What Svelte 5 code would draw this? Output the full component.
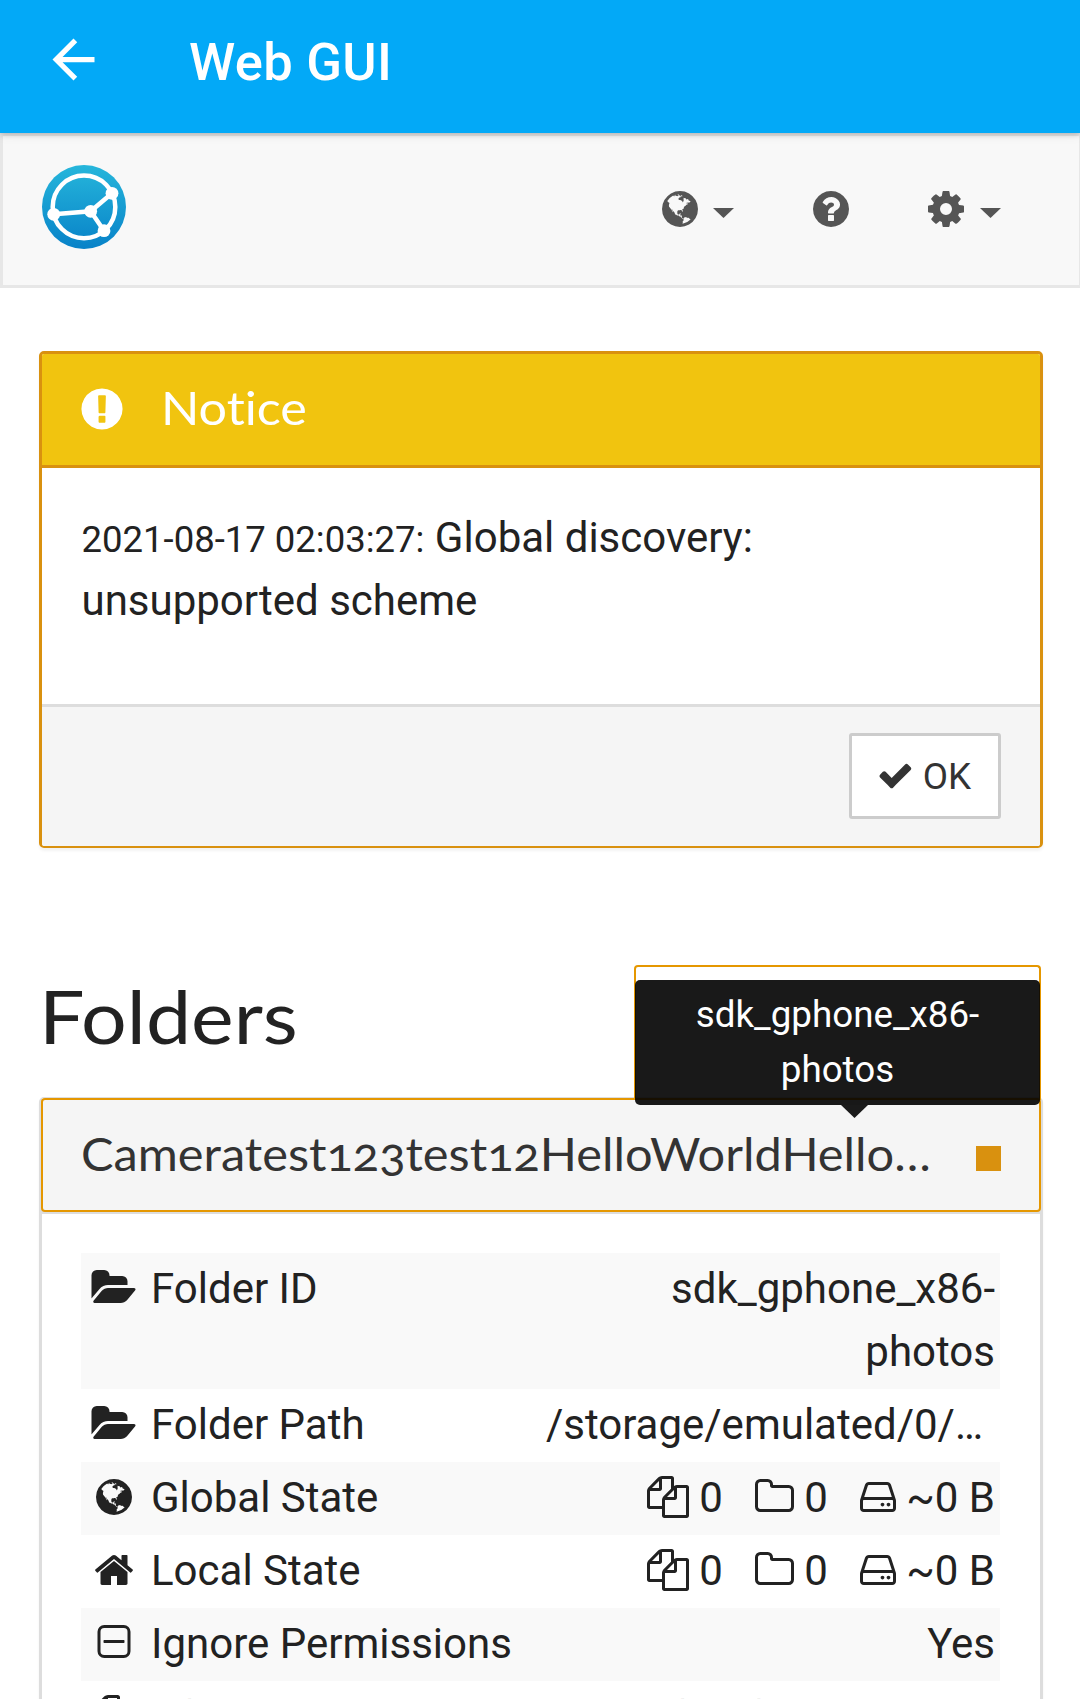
<script>
  const icons = {
    cog: 'M1152 896q0-106-75-181t-181-75-181 75-75 181 75 181 181 75 181-75 75-181zm512-109v222q0 12-8 23t-20 13l-185 28q-19 54-39 91 35 50 107 138 10 12 10 25t-9 23q-27 37-99 108t-94 71q-12 0-26-9l-138-108q-44 23-91 38-16 136-29 186-7 28-36 28h-222q-14 0-24.5-8.5t-11.5-21.5l-28-184q-49-16-90-37l-141 107q-10 9-25 9-14 0-25-11-126-114-165-168-7-10-7-23 0-12 8-23 15-21 51-66.5t54-70.5q-27-50-41-99l-183-27q-13-2-21-12.5t-8-23.5v-222q0-12 8-23t19-13l186-28q14-46 39-92-40-57-107-138-10-12-10-24 0-10 9-23 26-36 98.5-107.5t94.5-71.5q13 0 26 10l138 107q44-23 91-38 16-136 29-186 7-28 36-28h222q14 0 24.5 8.5t11.5 21.5l28 184q49 16 90 37l142-107q9-9 24-9 13 0 25 10 129 119 165 170 7 8 7 22 0 12-8 23-15 21-51 66.5t-54 70.5q26 50 41 98l183 28q13 2 21 12.5t8 23.5z',
    question: 'M1024 1376v-192q0-14-9-23t-23-9h-192q-14 0-23 9t-9 23v192q0 14 9 23t23 9h192q14 0 23-9t9-23zm256-672q0-88-55.5-163t-138.5-116-170-41q-243 0-371 213-15 24 8 42l132 100q7 6 19 6 16 0 25-12 53-68 86-92 34-24 86-24 48 0 85.5 26t37.5 59q0 38-20 61t-68 45q-63 28-115.5 86.5t-52.5 125.5v36q0 14 9 23t23 9h192q14 0 23-9t9-23q0-19 21.5-49.5t54.5-49.5q32-18 49-28.5t46-35 44.5-48 28-60.5 12.5-81zm384 192q0 209-103 385.5t-279.5 279.5-385.5 103-385.5-103-279.5-279.5-103-385.5 103-385.5 279.5-279.5 385.5-103 385.5 103 279.5 279.5 103 385.5z',
    globe: 'M896 128q209 0 385.5 103t279.5 279.5 103 385.5-103 385.5-279.5 279.5-385.5 103-385.5-103-279.5-279.5-103-385.5 103-385.5 279.5-279.5 385.5-103zm274 521q-2 1-9.5 9.5t-13.5 9.5q2 0 4.5-5t5-11 3.5-7q6-7 22-15 14-6 52-12 34-8 51 11-2-2 9.5-13t14.5-12q3-2 15-4.5t15-7.5l2-22q-12 1-17.5-7t-6.5-21q0 2-6 8 0-7-4.5-8t-11.5 1-9 1q-10-3-15-7.5t-8-16.5-4-15q-2-5-9.5-11t-9.5-10q-1-2-2.5-5.5t-3-6.5-4-5.5-5.5-2.5-7 5-7.5 10-4.5 5q-3-2-6-1.5t-4.5 1-4.5 3-5 3.5q-3 2-8.5 3t-8.5 2q15-5-1-11-10-4-16-3 9-4 7.5-12t-8.5-14h5q-1-4-8.5-8.5t-17.5-8.5-13-6q-8-5-34-9.5t-33-.5q-5 6-4.5 10.5t4 14 3.5 12.5q1 6-5.5 13t-6.5 12q0 7 14 15.5t10 21.5q-3 8-16 16t-16 12q-5 8-1.5 18.5t10.5 16.5q2 2 1.5 4t-3.5 4.5-5.5 4-6.5 3.5l-3 2q-11 5-20.5-6t-13.5-26q-7-25-16-30-23-8-29 1-5-13-41-26-25-9-58-4 6-1 0-15-7-15-19-12 3-6 4-17.5t1-13.5q3-13 12-23 1-1 7-8.5t9.5-13.5.5-6q35 4 50-11 5-5 11.5-17t10.5-17q9-6 14-5.5t14.5 5.5 14.5 5q14 1 15.5-11t-7.5-20q12 1 3-17-4-7-8-9-12-4-27 5-8 4 2 8-1-1-9.5 10.5t-16.5 17.5-16-5q-1-1-5.5-13.5t-9.5-13.5q-8 0-16 15 3-8-11-15t-24-8q19-12-8-27-7-4-20.5-5t-19.5 4q-5 7-5.5 11.5t5 8 10.5 5.5 11.5 4 8.5 3q14 10 8 14-2 1-8.5 3.5t-11.5 4.5-6 4q-3 4 0 14t-2 14q-5-5-9-17.5t-7-16.5q7 9-25 6l-10-1q-4 0-16 2t-20.5 1-13.5-8q-4-8 0-20 1-4 4-2-4-3-11-9.5t-10-8.5q-46 15-94 41 6 1 12-1 5-2 13-6.5t10-5.5q34-14 42-7l5-5q14 16 20 25-7-4-30-1-20 6-22 12 7 12 5 18-4-3-11.5-10t-14.5-11-15-5q-16 0-22 1-146 80-235 222 7 7 12 8 4 1 5 9t2.5 11 11.5-3q9 8 3 19 1-1 44 27 19 17 21 21 3 11-10 18-1-2-9-9t-9-4q-3 5 .5 18.5t10.5 12.5q-7 0-9.5 16t-2.5 35.5-1 23.5l2 1q-3 12 5.5 34.5t21.5 19.5q-13 3 20 43 6 8 8 9 3 2 12 7.5t15 10 10 10.5q4 5 10 22.5t14 23.5q-2 6 9.5 20t10.5 23q-1 0-2.5 1t-2.5 1q3 7 15.5 14t15.5 13q1 3 2 10t3 11 8 2q2-20-24-62-15-25-17-29-3-5-5.5-15.5t-4.5-14.5q2 0 6 1.5t8.5 3.5 7.5 4 2 3q-3 7 2 17.5t12 18.5 17 19 12 13q6 6 14 19.5t0 13.5q9 0 20 10.5t17 19.5q5 8 8 26t5 24q2 7 8.5 13.5t12.5 9.5l16 8 13 7q5 2 18.5 10.5t21.5 11.5q10 4 16 4t14.5-2.5 13.5-3.5q15-2 29 15t21 21q36 19 55 11-2 1 .5 7.5t8 15.5 9 14.5 5.5 8.5q5 6 18 15t18 15q6-4 7-9-3 8 7 20t18 10q14-3 14-32-31 15-49-18 0-1-2.5-5.5t-4-8.5-2.5-8.5 0-7.5 5-3q9 0 10-3.5t-2-12.5-4-13q-1-8-11-20t-12-15q-5 9-16 8t-16-9q0 1-1.5 5.5t-1.5 6.5q-13 0-15-1 1-3 2.5-17.5t3.5-22.5q1-4 5.5-12t7.5-14.5 4-12.5-4.5-9.5-17.5-2.5q-19 1-26 20-1 3-3 10.5t-5 11.5-9 7q-7 3-24 2t-24-5q-13-8-22.5-29t-9.5-37q0-10 2.5-26.5t3-25-5.5-24.5q3-2 9-9.5t10-10.5q2-1 4.5-1.5t4.5 0 4-1.5 3-6q-1-1-4-3-3-3-4-3 7 3 28.5-1.5t27.5 1.5q15 11 22-2 0-1-2.5-9.5t-.5-13.5q5 27 29 9 3 3 15.5 5t17.5 5q3 2 7 5.5t5.5 4.5 5-.5 8.5-6.5q10 14 12 24 11 40 19 44 7 3 11 2t4.5-9.5 0-14-1.5-12.5l-1-8v-18l-1-8q-15-3-18.5-12t1.5-18.5 15-18.5q1-1 8-3.5t15.5-6.5 12.5-8q21-19 15-35 7 0 11-9-1 0-5-3t-7.5-5-4.5-2q9-5 2-16 5-3 7.5-11t7.5-10q9 12 21 2 7-8 1-16 5-7 20.5-10.5t18.5-9.5q7 2 8-2t1-12 3-12q4-5 15-9t13-5l17-11q3-4 0-4 18 2 31-11 10-11-6-20 3-6-3-9.5t-15-5.5q3-1 11.5-.5t10.5-1.5q15-10-7-16-17-5-43 12zm-163 877q206-36 351-189-3-3-12.5-4.5t-12.5-3.5q-18-7-24-8 1-7-2.5-13t-8-9-12.5-8-11-7q-2-2-7-6t-7-5.5-7.5-4.5-8.5-2-10 1l-3 1q-3 1-5.5 2.5t-5.5 3-4 3 0 2.5q-21-17-36-22-5-1-11-5.5t-10.5-7-10-1.5-11.5 7q-5 5-6 15t-2 13q-7-5 0-17.5t2-18.5q-3-6-10.5-4.5t-12 4.5-11.5 8.5-9 6.5-8.5 5.5-8.5 7.5q-3 4-6 12t-5 11q-2-4-11.5-6.5t-9.5-5.5q2 10 4 35t5 38q7 31-12 48-27 25-29 40-4 22 12 26 0 7-8 20.5t-7 21.5q0 6 2 16z',
    exclamation: 'M896 128q209 0 385.5 103t279.5 279.5 103 385.5-103 385.5-279.5 279.5-385.5 103-385.5-103-279.5-279.5-103-385.5 103-385.5 279.5-279.5 385.5-103zm128 1247v-190q0-14-9-23.5t-22-9.5h-192q-13 0-23 10t-10 23v190q0 13 10 23t23 10h192q13 0 22-9.5t9-23.5zm-2-344l18-621q0-12-10-18-10-8-24-8h-220q-14 0-24 8-10 6-10 18l17 621q0 10 10 17.5t24 7.5h185q14 0 23.5-7.5t10.5-17.5z',
    check: 'M1671 566q0 40-28 68l-724 724-136 136q-28 28-68 28t-68-28l-136-136-362-362q-28-28-28-68t28-68l136-136q28-28 68-28t68 28l294 295 656-657q28-28 68-28t68 28l136 136q28 28 28 68z',
    folderOpen: 'M1815 952q0 31-31 66l-336 396q-43 51-120.5 86.5t-143.5 35.5h-1088q-34 0-60.5-13t-26.5-43q0-31 31-66l336-396q43-51 120.5-86.5t143.5-35.5h1088q34 0 60.5 13t26.5 43zm-343-344v160h-832q-94 0-197 47.5t-164 119.5l-337 396-5 6q0-4-.5-12.5t-.5-12.5v-960q0-92 66-158t158-66h320q92 0 158 66t66 158v32h544q92 0 158 66t66 158z',
    home: 'M1472 992v480q0 26-19 45t-45 19h-384v-384h-256v384h-384q-26 0-45-19t-19-45v-480q0-1 .5-3t.5-3l575-474 575 474q1 2 1 6zm223-69l-62 74q-8 9-21 11h-3q-13 0-21-7l-692-577-692 577q-12 8-24 7-13-2-21-11l-62-74q-8-10-7-23.5t11-21.5l719-599q32-26 76-26t76 26l244 204v-195q0-14 9-23t23-9h192q14 0 23 9t9 23v408l219 182q10 8 11 21.5t-7 23.5z',
    minusSquare: 'M480 128h832a288 288 0 0 1 288 288v832a288 288 0 0 1-288 288h-832a288 288 0 0 1-288-288v-832a288 288 0 0 1 288-288zm0 128a160 160 0 0 0-160 160v832a160 160 0 0 0 160 160h832a160 160 0 0 0 160-160v-832a160 160 0 0 0-160-160zm0 512h832q32 0 32 32v64q0 32-32 32h-832q-32 0-32-32v-64q0-32 32-32z',
    files: 'M1696 384q40 0 68 28t28 68v1216q0 40-28 68t-68 28h-960q-40 0-68-28t-28-68v-288h-544q-40 0-68-28t-28-68v-672q0-40 20-88t48-76l408-408q28-28 76-48t88-20h416q40 0 68 28t28 68v328q68-40 128-40h416zm-544 213l-299 299h299v-299zm-640-384l-299 299h299v-299zm196 647l316-316v-416h-384v416q0 40-28 68t-68 28h-416v640h512v-256q0-40 20-88t48-76zm956 804v-1152h-384v416q0 40-28 68t-68 28h-416v640h896z',
    folder: 'M1600 1312v-704q0-40-28-68t-68-28h-704q-40 0-68-28t-28-68v-64q0-40-28-68t-68-28h-320q-40 0-68 28t-28 68v960q0 40 28 68t68 28h1216q40 0 68-28t28-68zm128-704v704q0 92-66 158t-158 66h-1216q-92 0-158-66t-66-158v-960q0-92 66-158t158-66h320q92 0 158 66t66 158v32h672q92 0 158 66t66 158z',
    hdd: 'M1168 1216q0 33-23.5 56.5t-56.5 23.5-56.5-23.5-23.5-56.5 23.5-56.5 56.5-23.5 56.5 23.5 23.5 56.5zm256 0q0 33-23.5 56.5t-56.5 23.5-56.5-23.5-23.5-56.5 23.5-56.5 56.5-23.5 56.5 23.5 23.5 56.5zm112 160v-320q0-13-9.5-22.5t-22.5-9.5h-1216q-13 0-22.5 9.5t-9.5 22.5v320q0 13 9.5 22.5t22.5 9.5h1216q13 0 22.5-9.5t9.5-22.5zm-1230-480h1180l-157-482q-4-13-16-21.5t-26-8.5h-782q-14 0-26 8.5t-16 21.5zm1358 160v320q0 66-47 113t-113 47h-1216q-66 0-113-47t-47-113v-320q0-25 16-75l197-606q17-53 63-86t101-33h782q55 0 101 33t63 86l197 606q16 50 16 75z'
  };

  const rows = [
    { icon: 'folderOpen', label: 'Folder ID', value: 'sdk_gphone_x86-photos', wrap: true },
    { icon: 'folderOpen', label: 'Folder Path', value: '/storage/emulated/0/…', path: true },
    { icon: 'globe', label: 'Global State', stats: true },
    { icon: 'home', label: 'Local State', stats: true },
    { icon: 'minusSquare', label: 'Ignore Permissions', value: 'Yes' },
    { icon: 'files', label: 'File Versioning', value: 'Simple File Versioning' }
  ];
</script>

{#snippet icon(name, box = '0 0 1792 1792')}
  <svg class="icon" viewBox={box} aria-hidden="true"><path d={icons[name]} /></svg>
{/snippet}

<div class="screen">
  <header class="appbar">
    <svg class="back" viewBox="0 0 24 24" aria-hidden="true">
      <path d="M20 11H7.83l5.59-5.59L12 4l-8 8 8 8 1.41-1.41L7.83 13H20v-2z" />
    </svg>
    <h1>Web GUI</h1>
  </header>

  <nav class="navbar">
    <svg class="logo" viewBox="0 0 84 84" aria-hidden="true">
      <defs>
        <linearGradient id="brand" x1="0" y1="0" x2="0" y2="1">
          <stop offset="0" stop-color="#26b6db" />
          <stop offset="1" stop-color="#0882c8" />
        </linearGradient>
      </defs>
      <circle cx="42" cy="42" r="42" fill="url(#brand)" />
      <g fill="none" stroke="#fff" stroke-width="4.5">
        <circle cx="42" cy="41.9" r="31.3" />
        <path d="M11.7 49.3 48.7 46.3 70 28.3M48.7 46.3 62 65.7" />
      </g>
      <g fill="#fff">
        <circle cx="70" cy="28.3" r="6.4" />
        <circle cx="48.7" cy="46.3" r="6.4" />
        <circle cx="62" cy="65.7" r="6.4" />
        <circle cx="11.7" cy="49.3" r="6.4" />
      </g>
    </svg>
    <div class="menu">
      <span class="item">{@render icon('globe')}<i class="caret"></i></span>
      <span class="item">{@render icon('question')}</span>
      <span class="item">{@render icon('cog')}<i class="caret"></i></span>
    </div>
  </nav>

  <main>
    <section class="panel notice">
      <h3>{@render icon('exclamation')}<span>Notice</span></h3>
      <p><small>2021-08-17 02:03:27:</small> Global discovery:<br />unsupported scheme</p>
      <footer>
        <button>{@render icon('check')}<span>OK</span></button>
      </footer>
    </section>

    <h2><span>Folders</span></h2>

    <section class="panel folder">
      <div class="heading">
        <span class="name">Cameratest123test12HelloWorldHello…</span>
        <i class="status"></i>
        <div class="ring"></div>
        <div class="tooltip">sdk_gphone_x86-<br />photos</div>
      </div>
      <div class="rows">
        {#each rows as row}
          <div class="row">
            <span class="lead">{@render icon(row.icon)}</span>
            <span class="label">{row.label}</span>
            {#if row.stats}
              <span class="value stats">
                <span class="stat files">{@render icon('files')}0</span>
                <span class="stat dirs">{@render icon('folder', '64 0 1664 1792')}0</span>
                <span class="stat size">{@render icon('hdd', '128 0 1536 1792')}~0 B</span>
              </span>
            {:else}
              <span class="value" class:wrap={row.wrap} class:path={row.path}>{row.value}</span>
            {/if}
          </div>
        {/each}
      </div>
    </section>
  </main>
</div>

<style>
  :global(body) {
    margin: 0;
    background: #fff;
  }
  * {
    box-sizing: border-box;
  }
  .screen {
    width: 1080px;
    height: 1699px;
    overflow: hidden;
    font: 42px/63px Roboto, sans-serif;
    color: #222;
  }
  .icon {
    display: block;
    flex: none;
    width: 42px;
    height: 42px;
    fill: currentColor;
    overflow: visible;
  }
  .appbar {
    position: relative;
    z-index: 1;
    display: flex;
    align-items: flex-start;
    height: 133px;
    padding: 28px 42px 0;
    background: #03a9f7;
    color: #fff;
    box-shadow: 0 2px 5px rgba(0, 0, 0, 0.16), 0 1px 12px rgba(0, 0, 0, 0.08);
  }
  .back {
    width: 63px;
    height: 63px;
    fill: #fff;
  }
  h1 {
    margin: 3px 0 0 84px;
    font-size: 52.5px;
    line-height: 63px;
    font-weight: 500;
    letter-spacing: 0.3px;
  }
  .navbar {
    display: flex;
    justify-content: space-between;
    height: 155px;
    padding: 29px 78px 0 39px;
    border: 3px solid #e7e7e7;
    border-right-width: 1px;
    background: #f8f8f8;
    color: #555;
  }
  .logo {
    width: 84px;
    height: 84px;
  }
  .menu {
    display: flex;
    gap: 73px;
    padding-top: 23px;
  }
  .item {
    display: flex;
    gap: 12px;
  }
  .item:first-child {
    margin-right: 3px;
  }
  .item:last-child {
    gap: 13px;
  }
  .caret {
    margin-top: 20px;
    width: 21px;
    height: 10px;
    background: #555;
    clip-path: polygon(0 0, 100% 0, 50% 100%);
  }
  main {
    padding: 63px 37px 0 39px;
  }
  .panel {
    border: 3px solid #ddd;
    border-radius: 5px;
  }
  .notice {
    height: 497px;
    display: flex;
    flex-direction: column;
    border-color: #d9910f;
    border-bottom-width: 2px;
    overflow: hidden;
    box-shadow: 0 3px 3px rgba(0, 0, 0, 0.05);
  }
  h3 {
    display: flex;
    align-items: flex-start;
    gap: 35px;
    height: 114px;
    margin: 0;
    padding: 31px 36px 0;
    border-bottom: 3px solid #d9910f;
    background: #f1c40f;
    color: #fff;
    font: 400 47px/50px Lato, sans-serif;
    font-variant-ligatures: none;
  }
  h3 .icon {
    width: 48px;
    height: 48px;
  }
  h3 span {
    margin-top: -3px;
    transform: scaleX(1.07);
    transform-origin: left;
  }
  p {
    flex: 1;
    margin: 0;
    padding: 38px 39px 0 39.5px;
  }
  small {
    font-size: 36.5px;
    line-height: 0;
  }
  footer {
    display: flex;
    justify-content: flex-end;
    height: 142px;
    padding: 26px 39px 0;
    border-top: 3px solid #ddd;
    background: #f5f5f5;
  }
  button {
    display: flex;
    gap: 9px;
    width: 152px;
    height: 86px;
    padding: 20px 0 0 25px;
    border: 3px solid #ccc;
    border-radius: 3px;
    background: #fff;
    color: #333;
    font: 36.75px/42px Roboto, sans-serif;
  }
  button .icon {
    width: 36.75px;
    height: 36.75px;
    margin-top: 1px;
  }
  h2 {
    height: 80px;
    margin: 128px 0 41px;
    font: 400 73px/80px Lato, sans-serif;
  }
  h2 span {
    display: inline-block;
    transform: scaleX(1.105);
    transform-origin: left;
  }
  .folder {
    height: 640px;
    box-shadow: 0 3px 3px rgba(0, 0, 0, 0.05);
  }
  .heading {
    position: relative;
    display: flex;
    justify-content: space-between;
    height: 116px;
    margin-top: -2px;
    padding: 31px 39px 0;
    border-bottom: 3px solid #ddd;
    background: #f5f5f5;
    color: #333;
    font: 400 47px/50px Lato, sans-serif;
  }
  .heading::after {
    content: '';
    position: absolute;
    inset: 0 -1px -1px;
    border: 2px solid #e59700;
    border-radius: 4px;
  }
  .name {
    font-variant-numeric: oldstyle-nums;
    margin-top: -1px;
    transform: scaleX(1.037);
    transform-origin: left;
  }
  .status {
    margin-top: 17px;
    width: 25px;
    height: 25px;
    background: #d9910f;
  }
  .ring {
    position: absolute;
    right: -1px;
    top: -133px;
    width: 407px;
    height: 135px;
    border: 2px solid #e59700;
    border-bottom: 0;
    border-radius: 4px 4px 0 0;
  }
  .tooltip {
    position: absolute;
    z-index: 1;
    right: 0;
    top: -118px;
    width: 405px;
    height: 125px;
    padding: 7px 0;
    border-radius: 5px;
    background: rgba(0, 0, 0, 0.9);
    color: #fff;
    text-align: center;
    font: 36.75px/55px Roboto, sans-serif;
  }
  .tooltip::after {
    content: '';
    position: absolute;
    left: 206px;
    top: 125px;
    width: 27px;
    height: 13px;
    background: #1a1a1a;
    clip-path: polygon(0 0, 100% 0, 50% 100%);
  }
  .rows {
    padding: 39px 40px 0 39px;
  }
  .row {
    display: flex;
    padding: 4px 5px 6px 6px;
    white-space: nowrap;
  }
  .row:nth-child(odd) {
    background: #f9f9f9;
  }
  .lead {
    display: flex;
    justify-content: center;
    width: 54px;
    margin-right: 10px;
    padding-top: 10px;
  }
  .value {
    margin-left: auto;
    text-align: right;
  }
  .wrap {
    width: 340px;
    white-space: normal;
  }
  .path {
    padding-right: 12px;
  }
  .stats {
    display: flex;
    gap: 32px;
  }
  .stat {
    display: flex;
    gap: 10.4px;
  }
  .stat .icon {
    margin-top: 10px;
  }
  .dirs .icon {
    width: 39px;
  }
  .size .icon {
    width: 36px;
  }
</style>
